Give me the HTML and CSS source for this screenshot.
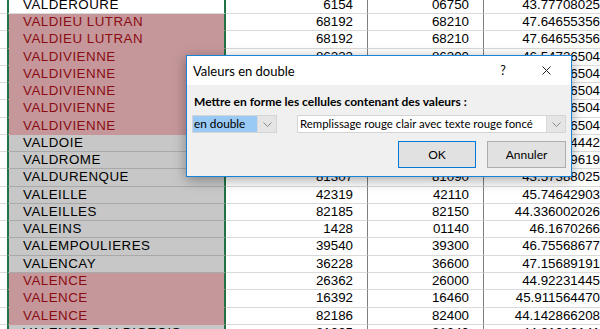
FILE: index.html
```html
<!DOCTYPE html>
<html>
	<head>
		<meta charset="utf-8">
		<link rel="stylesheet" href="styles.css">
	</head>
	<body>
		<div id="sheet">
			<div class="row active"><div class="gutter"></div><div class="name">VALDEROURE</div><div class="num b">6154</div><div class="num c">06750</div><div class="num d">43.77708025</div></div>
			<div class="row dup"><div class="gutter"></div><div class="name">VALDIEU LUTRAN</div><div class="num b">68192</div><div class="num c">68210</div><div class="num d">47.64655356</div></div>
			<div class="row dup"><div class="gutter"></div><div class="name">VALDIEU LUTRAN</div><div class="num b">68192</div><div class="num c">68210</div><div class="num d">47.64655356</div></div>
			<div class="row dup"><div class="gutter"></div><div class="name">VALDIVIENNE</div><div class="num b">86233</div><div class="num c">86300</div><div class="num d">46.54726504</div></div>
			<div class="row dup"><div class="gutter"></div><div class="name">VALDIVIENNE</div><div class="num b">86233</div><div class="num c">86300</div><div class="num d">46.54726504</div></div>
			<div class="row dup"><div class="gutter"></div><div class="name">VALDIVIENNE</div><div class="num b">86233</div><div class="num c">86300</div><div class="num d">46.54726504</div></div>
			<div class="row dup"><div class="gutter"></div><div class="name">VALDIVIENNE</div><div class="num b">86233</div><div class="num c">86300</div><div class="num d">46.54726504</div></div>
			<div class="row dup"><div class="gutter"></div><div class="name">VALDIVIENNE</div><div class="num b">86233</div><div class="num c">86300</div><div class="num d">46.54726504</div></div>
			<div class="row sel"><div class="gutter"></div><div class="name">VALDOIE</div><div class="num b">90099</div><div class="num c">90300</div><div class="num d">47.66854442</div></div>
			<div class="row sel"><div class="gutter"></div><div class="name">VALDROME</div><div class="num b">26319</div><div class="num c">26310</div><div class="num d">44.50469619</div></div>
			<div class="row sel"><div class="gutter"></div><div class="name">VALDURENQUE</div><div class="num b">81307</div><div class="num c">81090</div><div class="num d">43.57388025</div></div>
			<div class="row sel"><div class="gutter"></div><div class="name">VALEILLE</div><div class="num b">42319</div><div class="num c">42110</div><div class="num d">45.74642903</div></div>
			<div class="row sel"><div class="gutter"></div><div class="name">VALEILLES</div><div class="num b">82185</div><div class="num c">82150</div><div class="num d">44.336002026</div></div>
			<div class="row sel"><div class="gutter"></div><div class="name">VALEINS</div><div class="num b">1428</div><div class="num c">01140</div><div class="num d">46.1670266</div></div>
			<div class="row sel"><div class="gutter"></div><div class="name">VALEMPOULIERES</div><div class="num b">39540</div><div class="num c">39300</div><div class="num d">46.75568677</div></div>
			<div class="row sel"><div class="gutter"></div><div class="name">VALENCAY</div><div class="num b">36228</div><div class="num c">36600</div><div class="num d">47.15689191</div></div>
			<div class="row dup"><div class="gutter"></div><div class="name">VALENCE</div><div class="num b">26362</div><div class="num c">26000</div><div class="num d">44.92231445</div></div>
			<div class="row dup"><div class="gutter"></div><div class="name">VALENCE</div><div class="num b">16392</div><div class="num c">16460</div><div class="num d">45.911564470</div></div>
			<div class="row dup"><div class="gutter"></div><div class="name">VALENCE</div><div class="num b">82186</div><div class="num c">82400</div><div class="num d">44.142866208</div></div>
			<div class="row sel"><div class="gutter"></div><div class="name">VALENCE D ALBIGEOIS</div><div class="num b">81325</div><div class="num c">81340</div><div class="num d">44.01913141</div></div>
		</div>

		<div id="dialog">
			<div class="titlebar">
				<div class="title">Valeurs en double</div>
				<div class="help">?</div>
				<div class="close">
					<svg width="9" height="9" viewBox="0 0 9 9"><path d="M0.5 0.5 L8.5 8.5 M8.5 0.5 L0.5 8.5" stroke="#222" stroke-width="1" fill="none"/></svg>
				</div>
			</div>
			<div class="dlgBody">
				<div class="label">Mettre en forme les cellules contenant des valeurs :</div>
				<div class="comboRow">
					<div class="combo small">
						<div class="field picked">en double</div>
						<div class="arrowBtn"><svg width="9" height="5" viewBox="0 0 9 5"><path d="M0.5 0.5 L4.5 4.5 L8.5 0.5" stroke="#888" fill="none"/></svg></div>
					</div>
					<div class="combo wide">
						<div class="field">Remplissage rouge clair avec texte rouge foncé</div>
						<div class="arrowBtn"><svg width="9" height="5" viewBox="0 0 9 5"><path d="M0.5 0.5 L4.5 4.5 L8.5 0.5" stroke="#888" fill="none"/></svg></div>
					</div>
				</div>
				<div class="btnRow">
					<div class="btn default">OK</div>
					<div class="btn">Annuler</div>
				</div>
			</div>
		</div>
	</body>
</html>
```

FILE: styles.css
```css
body{
	margin:0;
	width:600px;
	height:329px;
	overflow:hidden;
	position:relative;
	background:#fff;
	font-family:"Liberation Sans", Arial, sans-serif;
	font-size:13.33px;
	color:#000;
}

#sheet{
	margin-top:-3.28px;
}

.row{
	display:grid;
	grid-template-columns:7px 219px 142px 116px 118px;
	height:17.28px;
}

.row > div{
	box-sizing:border-box;
	border-bottom:1px solid #dadada;
	line-height:16.28px;
	white-space:nowrap;
	overflow:hidden;
}

.name{
	border-left:2px solid #217346;
	border-right:2px solid #217346;
	padding-left:14px;
	letter-spacing:0.5px;
}

.num{
	text-align:right;
	padding-right:14px;
}

.b, .c{
	border-right:1px solid #7f7f7f;
}

.d{
	padding-right:2px;
	overflow:visible !important;
}

.dup .name{
	background:#c5979b;
	color:#8a0c12;
	border-bottom-color:#c5979b;
}

.sel .name{
	background:#c7c7c7;
	border-bottom-color:#a9a9a9;
}

#dialog{
	position:absolute;
	left:186px;
	top:55px;
	width:386px;
	height:122px;
	box-sizing:border-box;
	border:1px solid #1883d7;
	background:#f0f0f0;
	box-shadow:0 3px 12px rgba(0,0,0,0.35);
	font-family:Lato, "Noto Sans", sans-serif;
	font-size:12px;
	display:flex;
	flex-direction:column;
}

.titlebar{
	height:29px;
	background:#fff;
	display:flex;
	align-items:center;
	padding-left:6px;
}

.title{
	flex:1;
	font-size:13px;
}

.help{
	width:20px;
	text-align:center;
	margin-right:29px;
	font-size:12.5px;
}

.close{
	width:9px;
	height:9px;
	margin-right:20px;
	display:flex;
}

.dlgBody{
	flex:1;
	padding:10px 5px 8px 5px;
	display:flex;
	flex-direction:column;
}

.label{
	font-weight:bold;
	line-height:14px;
	height:14px;
	margin-left:2px;
	font-size:12px;
}

.comboRow{
	display:flex;
	gap:20px;
	margin-top:6px;
	height:18px;
}

.combo{
	display:flex;
	box-sizing:border-box;
	border:1px solid #d4d4d4;
	height:18px;
	min-width:0;
}

.combo.small{
	width:85px;
}

.combo.wide{
	flex:1;
	background:#fff;
}

.field{
	flex:1;
	min-width:0;
	line-height:16px;
	padding-left:2px;
	white-space:nowrap;
	overflow:hidden;
	font-size:11.4px;
}

.field.picked{
	background:#99c9f5;
	padding-left:1px;
	font-size:11.8px;
}

.arrowBtn{
	width:18px;
	flex:none;
	background:#e5e5e5;
	border-left:1px solid #d9d9d9;
	display:flex;
	align-items:center;
	justify-content:center;
}

.btnRow{
	display:flex;
	justify-content:flex-end;
	gap:11px;
	margin-top:8px;
}

.btn{
	width:79px;
	height:27px;
	box-sizing:border-box;
	border:1px solid #adadad;
	background:#e1e1e1;
	text-align:center;
	line-height:25px;
	font-size:12px;
}

.btn.default{
	width:78px;
	border-color:#0078d7;
}
```
